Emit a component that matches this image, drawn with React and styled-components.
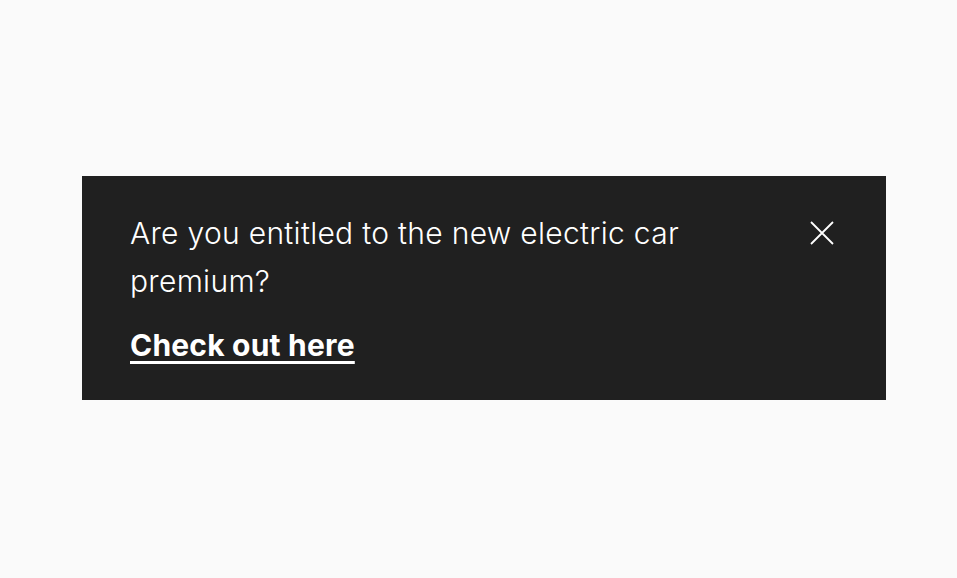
import React from 'react';
import styled, { createGlobalStyle } from 'styled-components';

const GlobalStyle = createGlobalStyle`
  html, body {
    margin: 0;
    padding: 0;
    background: #fafafa;
  }
  body {
    font-family: Inter, "Liberation Sans", sans-serif;
  }
`;

const Page = styled.div`
  width: 957px;
  height: 578px;
  display: flex;
  padding: 176px 0 0 82px;
  box-sizing: border-box;
`;

const Banner = styled.div`
  width: 804px;
  height: 224px;
  box-sizing: border-box;
  background: #202020;
  color: #ffffff;
  display: flex;
  align-items: flex-start;
  padding: 33px 46px 0 48px;
  gap: 24px;
`;

const Content = styled.div`
  flex: 1;
  display: flex;
  flex-direction: column;
  gap: 20px;
`;

const Message = styled.p`
  margin: 0;
  font-size: 30px;
  font-weight: 300;
  line-height: 48px;
  letter-spacing: 0.3px;
  max-width: 600px;
`;

const Link = styled.a`
  font-size: 30px;
  font-weight: 700;
  line-height: 40px;
  letter-spacing: 0.2px;
  color: #ffffff;
  text-decoration: underline;
  text-decoration-thickness: 3px;
  text-underline-offset: 5px;
  align-self: flex-start;
  cursor: pointer;
`;

const CloseButton = styled.button`
  width: 36px;
  height: 36px;
  margin-top: 6px;
  padding: 0;
  border: none;
  background: transparent;
  color: #ffffff;
  display: flex;
  align-items: center;
  justify-content: center;
  cursor: pointer;
`;

export default function App() {
  return (
    <>
      <GlobalStyle />
      <Page>
        <Banner>
          <Content>
            <Message>Are you entitled to the new electric car premium?</Message>
            <Link>Check out here</Link>
          </Content>
          <CloseButton aria-label="Close">
            <svg width="24" height="24" viewBox="0 0 24 24" fill="none" stroke="currentColor" strokeWidth="1.8">
              <path d="M1 1L23 23M23 1L1 23" />
            </svg>
          </CloseButton>
        </Banner>
      </Page>
    </>
  );
}
